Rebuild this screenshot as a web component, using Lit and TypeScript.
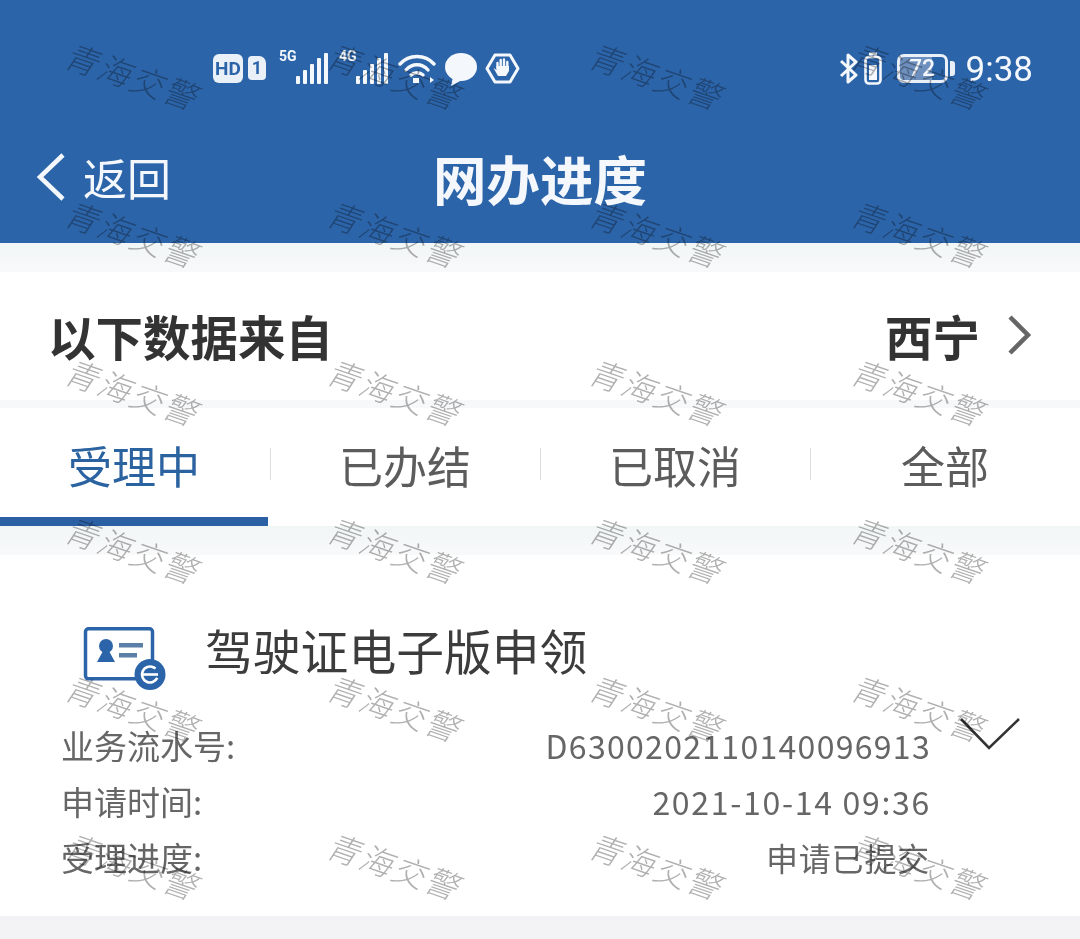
import { html, css, LitElement, svg } from "lit";
import { customElement, state } from "lit/decorators.js";

const bars = svg`
  <rect x="0" y="23" width="4" height="8" rx="1"/>
  <rect x="7" y="17" width="4" height="14" rx="1"/>
  <rect x="14" y="11" width="4" height="20" rx="1"/>
  <rect x="21" y="5" width="4" height="26" rx="1"/>
  <rect x="28" y="0" width="4" height="31" rx="1"/>
`;

@customElement("app-root")
export class AppRoot extends LitElement {
  @state() private tabs = ["受理中", "已办结", "已取消", "全部"];
  @state() private rows = [
    ["业务流水号:", "D6300202110140096913", "serial"],
    ["申请时间:", "2021-10-14 09:36", "date"],
    ["受理进度:", "申请已提交", "plain"],
  ];

  static styles = css`
    :host {
      display: block;
      position: relative;
      width: 1080px;
      height: 939px;
      overflow: hidden;
      background: #f3f3f5;
      font-family: "Noto Sans CJK SC", "Noto Sans", sans-serif;
      color: #333;
    }
    svg {
      display: block;
      flex: none;
    }

    .header {
      height: 243px;
      background: #2c64a9;
      color: #f4f8fc;
      box-sizing: border-box;
    }
    .status {
      height: 136px;
      box-sizing: border-box;
      padding: 0 47px 0 213px;
      display: flex;
      align-items: center;
      justify-content: space-between;
    }
    .status-left,
    .status-right {
      display: flex;
      align-items: center;
    }
    .hd {
      width: 30px;
      height: 29px;
      border-radius: 6px;
      background: #e9f0f8;
      color: #2c64a9;
      font: 700 19px/29px "Roboto", sans-serif;
      text-align: center;
      margin-right: 5px;
    }
    .sim {
      width: 18px;
      height: 24px;
      border-radius: 4px 7px 4px 4px;
      background: #e9f0f8;
      color: #2c64a9;
      font: 700 18px/24px "Roboto", sans-serif;
      text-align: center;
      margin-right: 13px;
    }
    .net {
      font: 700 14px/13px "Roboto", sans-serif;
      align-self: flex-start;
      width: 17px;
      margin-top: -1px;
    }
    .time {
      font: 400 35px/40px "Roboto", sans-serif;
      margin: 3px 0 0 11px;
    }
    .batt {
      width: 51px;
      height: 29px;
      box-sizing: border-box;
      border: 3px solid #e9f0f8;
      border-radius: 7px;
      background: linear-gradient(90deg, #6e90bf 72%, transparent 72%);
      text-align: center;
      font: 500 23px/23px "Roboto", sans-serif;
      margin-left: 15px;
    }
    .nub {
      width: 5px;
      height: 15px;
      margin-left: 2px;
      border-radius: 0 3px 3px 0;
      background: #e9f0f8;
    }

    .nav {
      position: relative;
      height: 107px;
      display: flex;
      align-items: flex-start;
      justify-content: center;
    }
    .back {
      position: absolute;
      left: 36px;
      top: 13px;
      display: flex;
      align-items: center;
      gap: 17px;
      font-size: 44px;
      line-height: 56px;
    }
    .title {
      font-size: 53.5px;
      line-height: 84px;
      font-weight: 700;
    }

    .band {
      background: linear-gradient(#f1f6f7, #f8f9fa);
      height: 29px;
    }
    .source {
      height: 128px;
      background: #fff;
      display: flex;
      align-items: center;
      justify-content: space-between;
      box-sizing: border-box;
      padding: 0 48px 2px 48px;
      font-size: 47.5px;
      font-weight: 700;
    }
    .source-right {
      display: flex;
      align-items: center;
      gap: 26px;
    }
    .gap {
      height: 8px;
      background: #f7f8fa;
    }

    .tabs {
      height: 118px;
      background: #fff;
      display: grid;
      grid-template-columns: repeat(4, 270px);
    }
    .tab {
      position: relative;
      text-align: center;
      font-size: 44px;
      line-height: 114px;
      color: #5c5c5c;
    }
    .tab + .tab::before {
      content: "";
      position: absolute;
      left: 0;
      top: 40px;
      height: 32px;
      width: 1px;
      background: #dcdcdc;
    }
    .tab.active {
      color: #2b63a0;
      text-indent: -2px;
    }
    .tab.active::after {
      content: "";
      position: absolute;
      left: 0;
      bottom: 0;
      height: 9px;
      width: 268px;
      background: #2b60a4;
    }

    .card {
      position: relative;
      height: 361px;
      background: #fff;
      box-sizing: border-box;
      padding: 69px 150px 0 61px;
    }
    .card-head {
      display: flex;
      align-items: center;
      gap: 39px;
      height: 70px;
      padding-left: 22px;
      margin-bottom: 23px;
    }
    .card-title {
      font-size: 47.8px;
      color: #3c3c3c;
      line-height: 60px;
      margin-top: -18px;
    }
    .row {
      display: flex;
      justify-content: space-between;
      height: 56px;
      line-height: 56px;
      font-size: 32px;
      color: #666;
    }
    .row .label {
      font-size: 33px;
    }
    .row.serial .value {
      letter-spacing: 1.3px;
      margin-right: -1px;
    }
    .row.date .value {
      letter-spacing: 1.7px;
      margin-right: -1px;
    }
    .row.plain .value {
      letter-spacing: 0.8px;
    }
    .chevron {
      position: absolute;
      left: 960px;
      top: 162px;
    }

    .marks {
      position: absolute;
      inset: -5px 0 auto 1px;
      display: grid;
      grid-template-columns: repeat(4, 262px);
      grid-auto-rows: 158px;
      pointer-events: none;
      mix-blend-mode: multiply;
    }
    .mark {
      display: flex;
      align-items: center;
      justify-content: center;
      font-size: 32.5px;
      font-style: italic;
      letter-spacing: 2px;
      font-weight: 300;
      color: #b0b0b0;
    }
    .mark span {
      transform: rotate(19deg);
      white-space: nowrap;
    }
  `;

  private renderStatus() {
    return html`
      <div class="status">
        <div class="status-left">
          <div class="hd">HD</div>
          <div class="sim">1</div>
          <div class="net">5G</div>
          <svg width="32" height="31" fill="#f4f8fc" style="margin:0 12px 0 0">${bars}</svg>
          <div class="net" style="margin-left:-1px">4G</div>
          <svg width="32" height="31" fill="#f4f8fc" style="margin-right:10px">${bars}</svg>
          <svg width="38" height="31" viewBox="0 0 38 31" fill="none" stroke="#f4f8fc" stroke-width="3.4" stroke-linecap="round">
            <path d="M2 11 C11 1 27 1 36 11" />
            <path d="M8 17 C14 10 24 10 30 17" />
            <path d="M13 22 C16 19 22 19 25 22" />
            <rect x="15" y="25" width="6" height="5" fill="#f4f8fc" stroke="none" />
            <path d="M32 24 l4 3 l-4 3 z" fill="#f4f8fc" stroke="none" />
          </svg>
          <svg width="32" height="33" viewBox="0 0 32 33" fill="#f4f8fc" style="margin:2px 0 0 9px">
            <ellipse cx="16" cy="14" rx="16" ry="14" />
            <path d="M8 24 L6 33 L17 27 z" />
          </svg>
          <svg width="35" height="31" viewBox="0 0 35 31" fill="none" stroke="#f4f8fc" style="margin-left:8px">
            <path d="M10 2 H25 L33 15.5 L25 29 H10 L2 15.5 Z" stroke-width="3" stroke-linejoin="round" />
            <path d="M12.5 15 V10 M15.7 14 V7 M19 14 V6.5 M22.3 15 V9" stroke-width="2.4" stroke-linecap="round" />
            <path d="M8.5 15 L13 23 H21 L24 18 V13 H11.5 V17 Z" fill="#f4f8fc" stroke="none" />
          </svg>
        </div>
        <div class="status-right">
          <svg width="20" height="31" viewBox="0 0 20 31" fill="none" stroke="#f4f8fc" stroke-width="3" stroke-linejoin="round">
            <path d="M2 8 L17 22 L9 29 V2 L17 9 L2 23" />
          </svg>
          <svg width="18" height="33" viewBox="0 0 18 33" fill="none" stroke="#f4f8fc" style="margin-left:5px">
            <rect x="1.5" y="5" width="15" height="26.5" rx="3.5" stroke-width="2.6" />
            <rect x="5" y="0.5" width="8" height="3" fill="#f4f8fc" stroke="none" />
            <rect x="5" y="13" width="8" height="15" fill="#f4f8fc" stroke="none" />
          </svg>
          <div class="batt">72</div>
          <div class="nub"></div>
          <div class="time">9:38</div>
        </div>
      </div>
    `;
  }

  private renderCardIcon() {
    return html`
      <svg width="83" height="64" viewBox="0 0 83 64">
        <rect x="2.5" y="1.8" width="67" height="50" rx="3" fill="#fff" stroke="#2c64a9" stroke-width="3.5" />
        <circle cx="23" cy="19" r="7" fill="#2c64a9" />
        <path d="M20 24 H26 L32 35 H14 Z" fill="#2c64a9" />
        <rect x="36" y="16" width="24" height="4.5" fill="#5c7fa8" />
        <rect x="36" y="26" width="18" height="4.5" fill="#5c7fa8" />
        <circle cx="67" cy="47.5" r="15.5" fill="#2c64a9" />
        <circle cx="67" cy="47.5" r="8" fill="none" stroke="#fff" stroke-width="2.6" stroke-dasharray="40 10" transform="rotate(25 67 47.5)" />
        <path d="M60 47.5 H75" stroke="#fff" stroke-width="2.6" />
      </svg>
    `;
  }

  render() {
    return html`
      <div class="header">
        ${this.renderStatus()}
        <div class="nav">
          <div class="back">
            <svg width="30" height="50" viewBox="0 0 30 50" fill="none" stroke="#f4f8fc" stroke-width="4.5">
              <path d="M27 3 L4 25 L27 47" />
            </svg>
            <span>返回</span>
          </div>
          <div class="title">网办进度</div>
        </div>
      </div>
      <div class="band"></div>
      <div class="source">
        <span>以下数据来自</span>
        <div class="source-right">
          <span>西宁</span>
          <svg width="26" height="42" viewBox="0 0 26 42" fill="none" stroke="#666" stroke-width="4.5">
            <path d="M4 3 L22 21 L4 39" />
          </svg>
        </div>
      </div>
      <div class="gap"></div>
      <div class="tabs">
        ${this.tabs.map(
          (t, i) => html`<div class="tab ${i === 0 ? "active" : ""}">${t}</div>`
        )}
      </div>
      <div class="band"></div>
      <div class="card">
        <div class="card-head">
          ${this.renderCardIcon()}
          <div class="card-title">驾驶证电子版申领</div>
        </div>
        ${this.rows.map(
          (r) => html`<div class="row ${r[2]}"><span class="label">${r[0]}</span><span class="value">${r[1]}</span></div>`
        )}
        <svg class="chevron" width="60" height="34" viewBox="0 0 60 34" fill="none" stroke="#333" stroke-width="2.6">
          <path d="M1 2 L29 31 L59 2" />
        </svg>
      </div>
      <div class="marks">
        ${Array.from({ length: 24 }).map(
          () => html`<div class="mark"><span>青海交警</span></div>`
        )}
      </div>
    `;
  }
}
